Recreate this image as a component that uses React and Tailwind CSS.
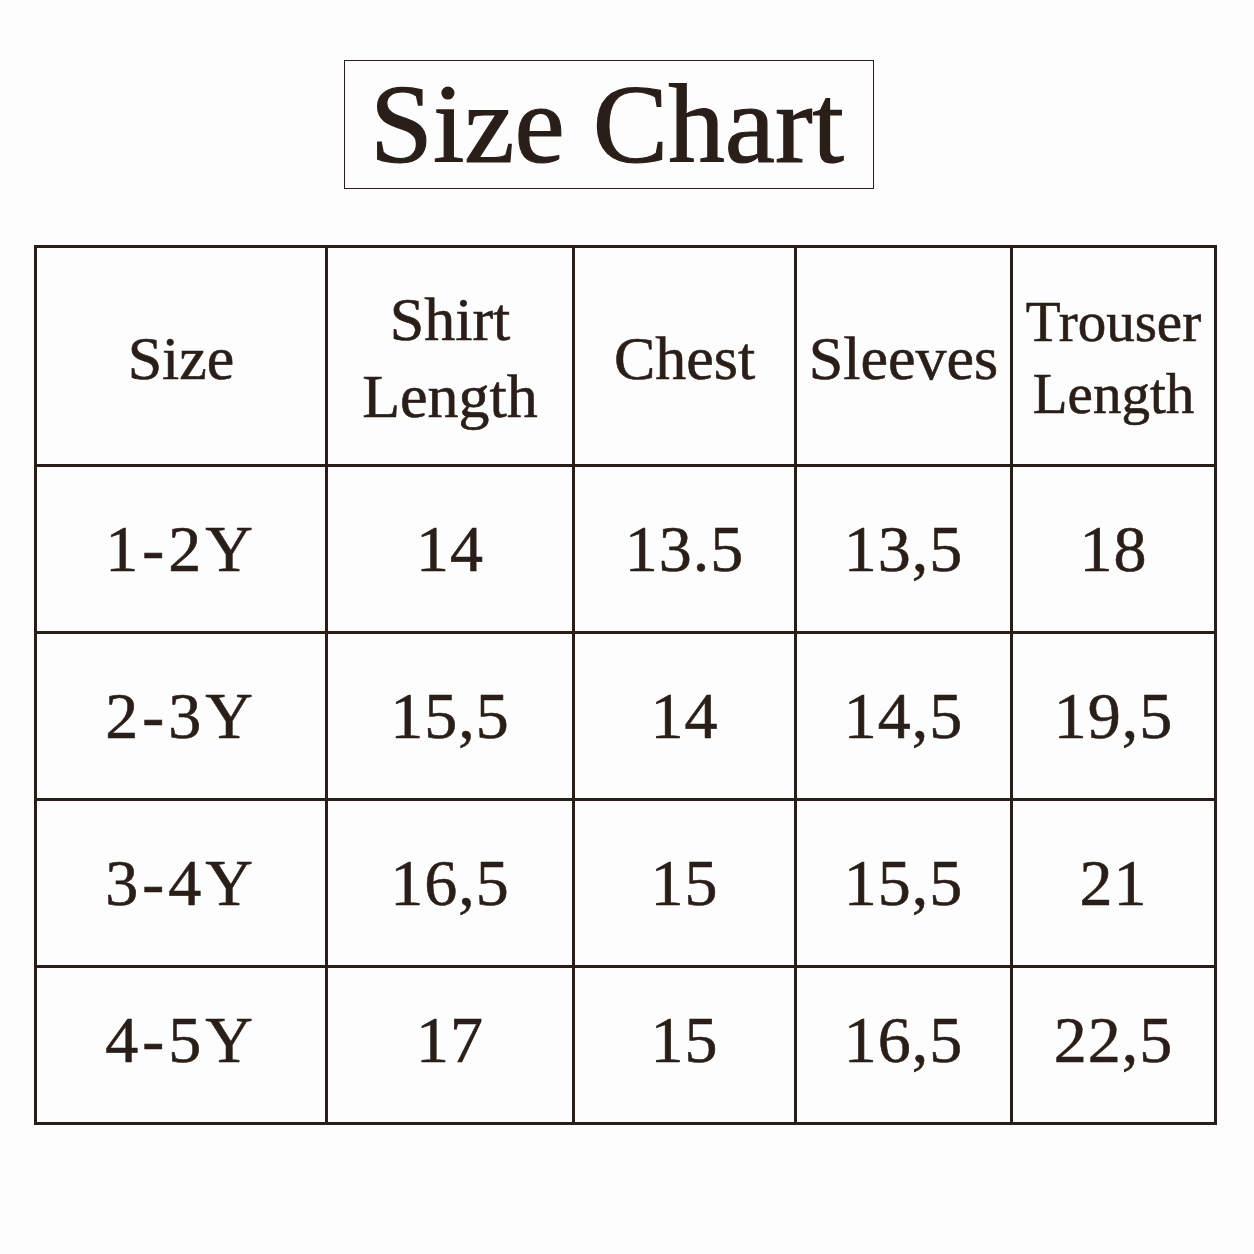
import React from "react";

const headers = [
  ["Size"],
  ["Shirt", "Length"],
  ["Chest"],
  ["Sleeves"],
  ["Trouser", "Length"],
];

const rows = [
  ["1-2Y", "14", "13.5", "13,5", "18"],
  ["2-3Y", "15,5", "14", "14,5", "19,5"],
  ["3-4Y", "16,5", "15", "15,5", "21"],
  ["4-5Y", "17", "15", "16,5", "22,5"],
];

export default function App() {
  return (
    <div
      className="w-[1254px] h-[1254px] bg-[#fdfdfd] text-[#2a1e18] flex flex-col [-webkit-text-stroke:0.6px_#2a1e18]"
      style={{ fontFamily: '"Liberation Serif", "Times New Roman", serif' }}
    >
      <div className="pt-[60px] pl-[344px]">
        <div className="w-[530px] h-[129px] border-[1.5px] border-[#2a1e18] flex items-center justify-center">
          <span className="text-[113px] leading-none mt-[-2px] mr-[4px] [-webkit-text-stroke:1.2px_#2a1e18]">Size Chart</span>
        </div>
      </div>
      <div className="pt-[56px] pl-[34px]">
        <div className="grid grid-cols-[291px_247px_222px_216px_204px] w-fit border-t-[3px] border-l-[3px] border-[#2a1e18]">
          {headers.map((h, i) => (
            <div
              key={i}
              className={`h-[219px] border-r-[3px] border-b-[3px] border-[#2a1e18] flex flex-col items-center justify-center pt-[4px] ${
                i === 4 ? "text-[57px] leading-[72px]" : "text-[62px] leading-[77px]"
              }`}
            >
              {h.map((l) => (
                <span key={l}>{l}</span>
              ))}
            </div>
          ))}
          {rows.map((r, ri) =>
            r.map((c, ci) => (
              <div
                key={ri + "-" + ci}
                className={`${ri === 3 ? "h-[157px] pb-[10px]" : "h-[167px]"} border-r-[3px] border-b-[3px] border-[#2a1e18] flex items-center justify-center text-[66px] leading-none ${
                  ci === 0 ? "tracking-[4px]" : "tracking-[1px]"
                }`}
              >
                {c}
              </div>
            ))
          )}
        </div>
      </div>
    </div>
  );
}
